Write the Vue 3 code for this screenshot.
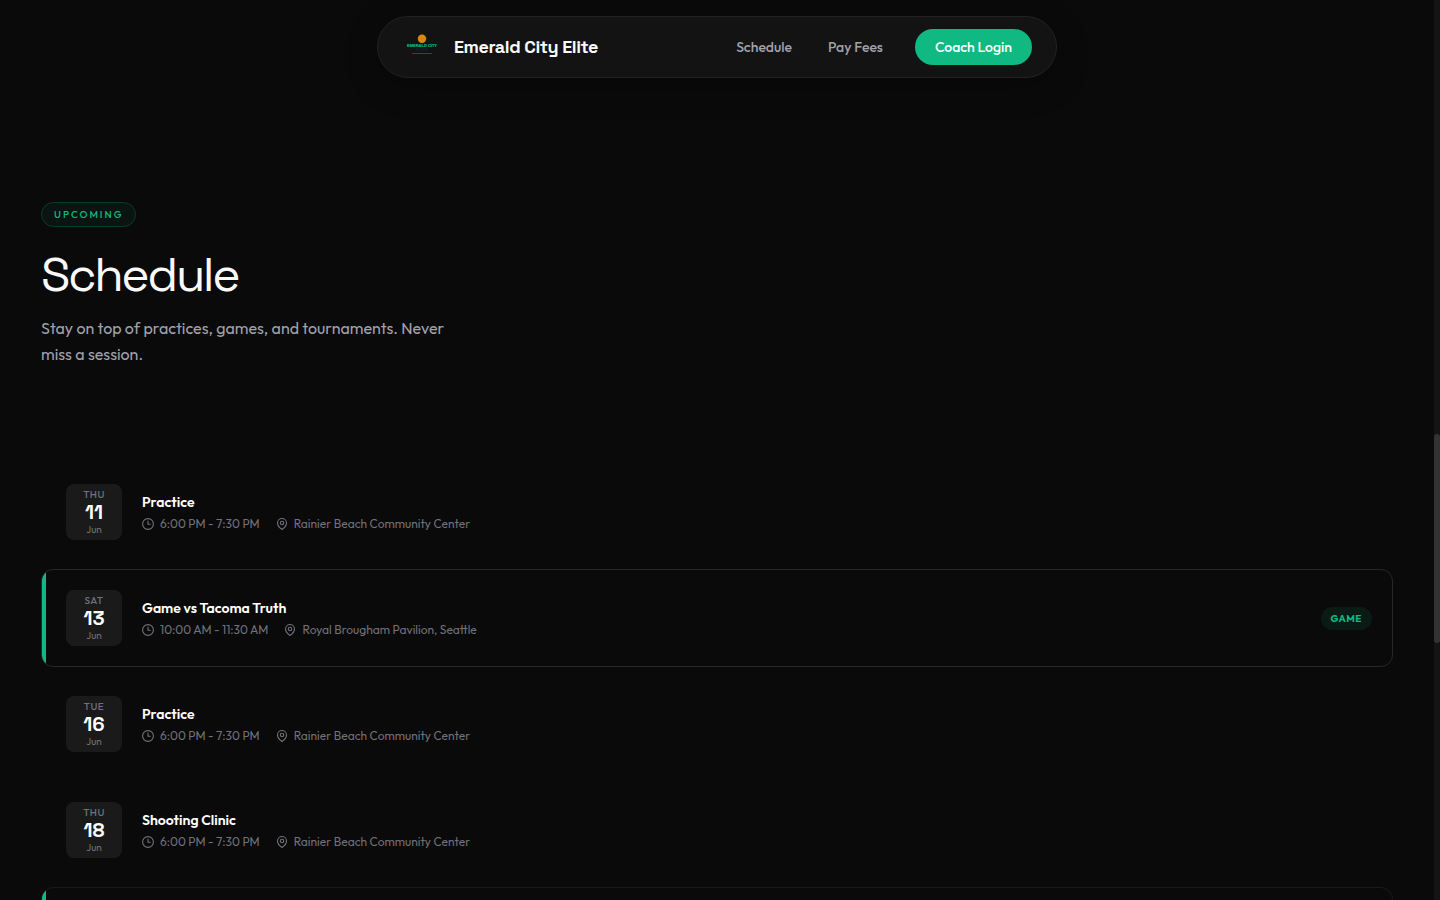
<script setup>
const rows = [
  { day: 'THU', date: '11', month: 'Jun', title: 'Practice', time: '6:00 PM - 7:30 PM', place: 'Rainier Beach Community Center' },
  { day: 'SAT', date: '13', month: 'Jun', title: 'Game vs Tacoma Truth', time: '10:00 AM - 11:30 AM', place: 'Royal Brougham Pavilion, Seattle', game: true },
  { day: 'TUE', date: '16', month: 'Jun', title: 'Practice', time: '6:00 PM - 7:30 PM', place: 'Rainier Beach Community Center' },
  { day: 'THU', date: '18', month: 'Jun', title: 'Shooting Clinic', time: '6:00 PM - 7:30 PM', place: 'Rainier Beach Community Center' },
]
</script>

<template>
  <div class="page">
    <header class="bar">
      <nav class="nav" aria-label="Main">
        <a class="brand" href="#">
          <svg class="logo" viewBox="0 0 36 36" aria-hidden="true">
            <circle cx="18" cy="9.8" r="4.2" fill="#e58a0c" />
            <path d="M13.8 9.8h8.4M18 5.6v8.4M15 6.9c1.6 1.8 1.6 4 0 5.8M21 6.9c-1.6 1.8-1.6 4 0 5.8" fill="none" stroke="#c87608" stroke-width=".4" />
            <text x="18" y="17.9" text-anchor="middle" class="logo-top">EMERALD CITY</text>
            <text x="18" y="22" text-anchor="middle" class="logo-bottom">ELITE</text>
            <path d="M8 24.5h20" stroke="#0b5a40" stroke-width="1" />
          </svg>
          <span>Emerald City Elite</span>
        </a>
        <div class="links">
          <a class="link" href="#schedule">Schedule</a>
          <a class="link" href="#fees">Pay Fees</a>
          <a class="login" href="#login">Coach Login</a>
        </div>
      </nav>
    </header>

    <main id="schedule" class="main">
      <span class="eyebrow">UPCOMING</span>
      <h1>Schedule</h1>
      <p class="lead">Stay on top of practices, games, and tournaments. Never miss a session.</p>

      <ul class="list">
        <li v-for="r in rows" :key="r.date" class="row" :class="{ game: r.game }">
          <div class="date">
            <span class="day">{{ r.day }}</span>
            <span class="num">{{ r.date }}</span>
            <span class="month">{{ r.month }}</span>
          </div>
          <div class="info">
            <h2>{{ r.title }}</h2>
            <div class="meta">
              <span class="item">
                <svg viewBox="0 0 24 24" aria-hidden="true"><circle cx="12" cy="12" r="10.8" /><path d="M12 6v6.5h4.5" /></svg>
                {{ r.time }}
              </span>
              <span class="item">
                <svg viewBox="0 0 24 24" aria-hidden="true"><path d="M21 10c0 7-9 13-9 13S3 17 3 10a9 9 0 0 1 18 0z" /><circle cx="12" cy="10" r="3.4" /></svg>
                {{ r.place }}
              </span>
            </div>
          </div>
          <span v-if="r.game" class="tag">GAME</span>
        </li>
        <li class="row game next"></li>
      </ul>
    </main>

    <div class="track" aria-hidden="true"><div class="thumb"></div></div>
  </div>
</template>

<style>
body { background: #0a0a0a; }
</style>

<style scoped>
* { box-sizing: border-box; }
.page {
  height: 100vh;
  overflow: hidden;
  padding-right: 6px;
  background: #0a0a0a;
  color: #fafafa;
  font-family: Outfit, Lato, "Liberation Sans", sans-serif;
}
a { text-decoration: none; color: inherit; }
.bar { display: flex; justify-content: center; padding: 16px 24px 0; }
.nav {
  display: flex;
  align-items: center;
  justify-content: space-between;
  width: 100%;
  max-width: 680px;
  padding: 12px 24px 12px 26px;
  border: 1px solid #222;
  border-radius: 31px;
  background: #131313;
  box-shadow: 0 8px 32px rgba(0, 0, 0, .25);
}
.brand {
  display: flex;
  align-items: center;
  gap: 14px;
  font: 600 18px/24px "Space Grotesk", Inter, sans-serif;
  letter-spacing: -0.025em;
}
.logo { width: 36px; height: 36px; letter-spacing: normal; }
.logo-top { font: 700 4px "Liberation Sans", sans-serif; fill: #0fae7a; stroke: #0fae7a; stroke-width: .2; }
.logo-bottom { font: 700 4px "Liberation Sans", sans-serif; fill: #1c2233; }
.links { display: flex; align-items: center; font-size: 14px; line-height: 20px; font-weight: 500; }
.link { margin-right: 36px; color: #a1a1aa; }
.link:nth-child(2) { margin-right: 32px; }
.login { padding: 8px 20px; border-radius: 18px; background: #10b981; color: #fff; }
.main { max-width: 1400px; margin: 0 auto; padding: 124px 24px 0; }
.eyebrow {
  display: block;
  width: fit-content;
  padding: 4px 12px;
  border: 1px solid #0c3b2c;
  border-radius: 13px;
  background: #0a1512;
  color: #10b981;
  font-size: 10px;
  line-height: 15px;
  font-weight: 500;
  letter-spacing: 2px;
}
h1 { margin: 20px 0 0; font: 400 48px/56px "Space Grotesk", Inter, sans-serif; letter-spacing: -0.05em; }
.lead { margin: 12px 0 0; max-width: 420px; color: #a1a1aa; font-size: 16px; line-height: 26px; }
.list { list-style: none; margin: 96px 0 0; padding: 0; display: grid; gap: 8px; }
.row {
  display: flex;
  align-items: center;
  gap: 20px;
  min-height: 98px;
  padding: 20px 20px 20px 24px;
  border: 1px solid transparent;
  border-radius: 12px;
  position: relative;
  overflow: hidden;
}
.game { border-color: #27272a; }
.next { border-color: #1a1a1a; }
.game::before { content: ""; position: absolute; inset: 0 auto 0 0; width: 4px; background: #10b981; }
.date {
  display: flex;
  flex-direction: column;
  align-items: center;
  justify-content: center;
  width: 56px;
  height: 56px;
  border-radius: 8px;
  background: #1a1a1a;
  color: #71717a;
}
.day { font-size: 10px; line-height: 13px; font-weight: 500; letter-spacing: 0.05em; }
.num { font: 700 20px/22px "Space Grotesk", Inter, sans-serif; color: #fff; }
.month { font-size: 10px; line-height: 13px; }
.info { flex: 1; }
h2 { margin: 0 0 4px; font-size: 14px; line-height: 20px; font-weight: 600; color: #fff; }
.meta { display: flex; gap: 16px; color: #71717a; font-size: 12px; line-height: 16px; }
.item { display: flex; align-items: center; gap: 6px; }
.item svg { width: 12px; height: 12px; fill: none; stroke: currentColor; stroke-width: 2.2; stroke-linecap: round; stroke-linejoin: round; overflow: visible; }
.tag { padding: 4px 10px; border-radius: 12px; background: #0a1a15; color: #10b981; font-size: 10px; line-height: 15px; font-weight: 700; letter-spacing: 0.05em; }
.track { position: fixed; inset: 0 0 0 auto; width: 6px; background: #141414; }
.thumb { position: absolute; top: 48.2%; width: 100%; height: 23.3%; border-radius: 3px; background: #333; }
</style>
